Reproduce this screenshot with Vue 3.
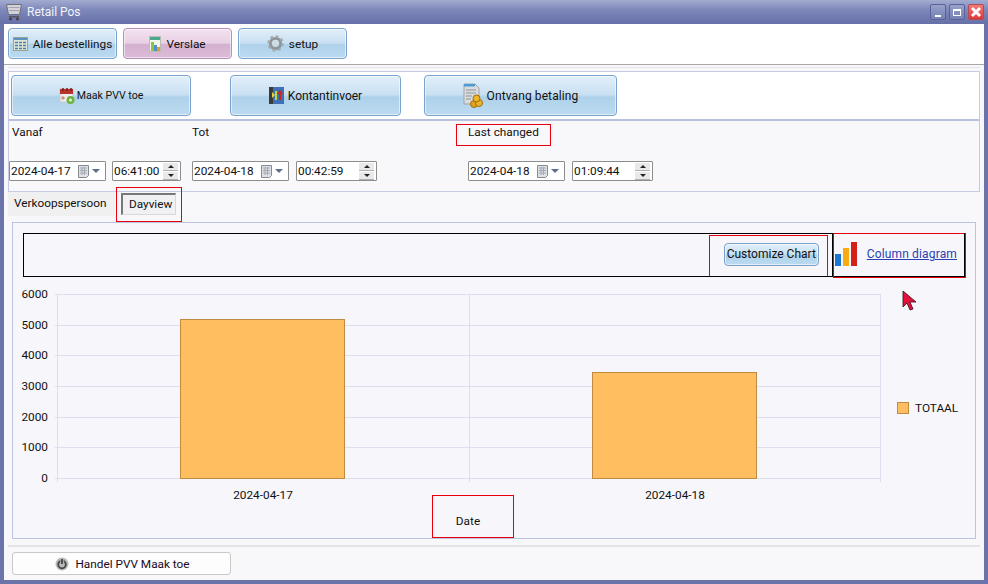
<script setup>
// Retail Pos: verslae scherm
const ticks = [6000, 5000, 4000, 3000, 2000, 1000, 0]
const plot = { left: 45, right: 868, top: 72, bottom: 256 }

const yFor = (v) => plot.bottom - (v / 6000) * (plot.bottom - plot.top)

const bars = [
  { label: '2024-04-17', value: 5180, x: 168, w: 164 },
  { label: '2024-04-18', value: 3450, x: 580, w: 164 }
]

const topButtons = [
  { text: 'Alle bestellings', icon: 'list', kind: 'blue' },
  { text: 'Verslae', icon: 'report', kind: 'pink' },
  { text: 'setup', icon: 'gear', kind: 'blue' }
]

const filters = [
  { label: 'Vanaf', date: '2024-04-17', time: '06:41:00', cls: 'f1' },
  { label: 'Tot', date: '2024-04-18', time: '00:42:59', cls: 'f2' },
  { label: 'Last changed', date: '2024-04-18', time: '01:09:44', cls: 'f3' }
]
</script>

<template>
  <div class="window">
    <div class="titlebar">
      <svg class="cart" width="16" height="18" viewBox="0 0 16 18">
        <path d="M0.500 1.500h15l-2 10h-11z" fill="#d4d4d8" stroke="#6f6f78" />
        <path d="M2.500 4.500h11M3 7.500h10" stroke="#a3a3ad" />
        <rect x="3" y="13" width="10" height="1.500" fill="#55555c" />
        <circle cx="4.500" cy="16" r="1.400" fill="#3f3f45" />
        <circle cx="11.500" cy="16" r="1.400" fill="#3f3f45" />
      </svg>
      <span class="title">Retail Pos</span>
      <div class="win-btns">
        <div class="win-btn"><i class="min"></i></div>
        <div class="win-btn"><i class="max"></i></div>
        <div class="win-btn close">
          <svg width="12" height="12" viewBox="0 0 12 12"><path d="M2 2l8 8M10 2l-8 8" stroke="#fff" stroke-width="3" /></svg>
        </div>
      </div>
    </div>

    <div class="client">
      <div class="toolbar">
        <button v-for="b in topButtons" :key="b.text" :class="['gbtn', 'top-btn', b.kind, b.icon]">
          <svg v-if="b.icon === 'list'" width="15" height="14" viewBox="0 0 15 14">
            <rect x="0.500" y="0.500" width="14" height="13" fill="#dfe6d8" stroke="#9aa58f" />
            <rect x="1" y="1" width="13" height="2" fill="#5d93c4" />
            <path d="M2 5.500h11M2 8.500h11M2 11.500h11" stroke="#4a7fb0" stroke-width="1.300" stroke-dasharray="3 1" />
          </svg>
          <svg v-else-if="b.icon === 'report'" width="12" height="16" viewBox="0 0 12 16">
            <rect x="0.500" y="0.500" width="11" height="15" fill="#f2f4ee" stroke="#b9bdb4" />
            <rect x="1" y="1" width="10" height="3" fill="#48a98c" />
            <rect x="2" y="6" width="3" height="9" fill="#8cc63f" />
            <rect x="5" y="9" width="3" height="6" fill="#4f8fd0" />
            <rect x="8" y="11" width="3" height="4" fill="#e59a2f" />
          </svg>
          <svg v-else width="17" height="17" viewBox="0 0 18 18">
            <circle cx="9" cy="9" r="5.500" fill="none" stroke="#8d9499" stroke-width="3" />
            <circle cx="9" cy="9" r="7.500" fill="none" stroke="#a5abaf" stroke-width="2.500" stroke-dasharray="3 2.890" />
            <circle cx="9" cy="9" r="3" fill="#d6dadb" />
          </svg>
          <span>{{ b.text }}</span>
        </button>
      </div>

      <div class="main">
        <div class="actions">
          <button class="gbtn act a1">
            <svg width="16" height="18" viewBox="0 0 16 18">
              <rect x="1" y="2" width="13" height="13" fill="#eee" stroke="#c7c7c7" />
              <rect x="1" y="2" width="13" height="5" fill="#b8322e" />
              <path d="M4 1v3M8 1v3M12 1v3" stroke="#7a1c1a" stroke-width="1.500" />
              <circle cx="11.500" cy="13" r="4" fill="#6cb33f" />
              <circle cx="11.500" cy="13" r="1.500" fill="#e4f3d4" />
              <circle cx="4" cy="11" r="1.800" fill="#d08f8f" />
            </svg>
            <span>Maak PVV toe</span>
          </button>
          <button class="gbtn act a2">
            <svg width="15" height="17" viewBox="0 0 15 17">
              <rect x="0" y="0" width="4" height="17" fill="#3a3a3a" />
              <rect x="4" y="0" width="11" height="17" fill="#3f6fb5" />
              <path d="M3 5l3 3-3 3z" fill="#e8d03a" />
              <path d="M6 4h2v9H6z" fill="#b7dc3c" />
              <path d="M11 3l3 4h-2v6h-2V7H8z" fill="#c9261f" />
            </svg>
            <span>Kontantinvoer</span>
          </button>
          <button class="gbtn act a3">
            <svg width="20" height="25" viewBox="0 0 20 25">
              <path d="M1 1h11l4 4v16H1z" fill="#d9dcdf" stroke="#9ea3a8" />
              <rect x="1" y="1" width="11" height="2.500" fill="#4e9bd4" />
              <path d="M3 7h10M3 10h10M3 13h6M3 16h5" stroke="#8e9398" />
              <circle cx="11" cy="21" r="3.500" fill="#e4a11b" stroke="#9c6c0c" />
              <circle cx="16" cy="20" r="3.500" fill="#f0b429" stroke="#9c6c0c" />
              <circle cx="13.500" cy="15.500" r="3.500" fill="#f0b429" stroke="#9c6c0c" />
            </svg>
            <span>Ontvang betaling</span>
          </button>
        </div>

        <div class="filters">
          <div v-for="f in filters" :key="f.label" :class="['filter', f.cls]">
            <div class="flabel">{{ f.label }}</div>
            <div class="finputs">
              <div class="inp date">
                <span>{{ f.date }}</span>
                <svg class="cal" width="12" height="13" viewBox="0 0 12 13">
                  <path d="M0.500 0.500h10v10l-2 2h-8z" fill="#dde1e7" stroke="#858a92" />
                  <path d="M2 3h7M2 5.500h7M2 8h7M4 2v8M6.500 2v8" stroke="#a4a9b1" />
                </svg>
                <i class="caret"></i>
              </div>
              <div class="inp time">
                <span>{{ f.time }}</span>
                <div class="spin">
                  <b><i class="up"></i></b>
                  <b><i class="down"></i></b>
                </div>
              </div>
            </div>
          </div>
        </div>

        <div class="tabs">
          <div class="tab">Verkoopspersoon</div>
          <div class="tab-on">Dayview</div>
        </div>

        <div class="card">
          <div class="chart-head">
            <button class="gbtn mini">Customize Chart</button>
            <svg class="bars-ico" width="22" height="24" viewBox="0 0 22 24">
              <rect x="0" y="12" width="6" height="12" fill="#1976d2" />
              <rect x="8" y="6" width="6" height="18" fill="#f9ab14" />
              <rect x="16" y="0" width="6" height="24" fill="#d32019" />
            </svg>
            <a class="diagram">Column diagram</a>
          </div>

          <svg class="chart" width="962" height="270" viewBox="0 42 962 270">
            <g stroke="#dcdff0" fill="none">
              <line v-for="t in ticks" :key="t" :x1="plot.left - 2" :x2="plot.right" :y1="Math.round(yFor(t)) + 0.500" :y2="Math.round(yFor(t)) + 0.500" />
              <line :x1="plot.left + 0.500" :x2="plot.left + 0.500" :y1="plot.top" :y2="plot.bottom + 4" />
              <line x1="457.500" x2="457.500" :y1="plot.top" :y2="plot.bottom + 4" />
              <line :x1="plot.right + 0.500" :x2="plot.right + 0.500" :y1="plot.top" :y2="plot.bottom + 4" />
            </g>
            <text v-for="t in ticks" :key="'l' + t" x="36" :y="yFor(t) + 4" text-anchor="end" class="ct">{{ t }}</text>
            <g v-for="b in bars" :key="b.label">
              <rect :x="b.x + 0.500" :y="Math.round(yFor(b.value)) + 0.500" :width="b.w" :height="plot.bottom - Math.round(yFor(b.value))" fill="#ffbe5f" stroke="#bf8b43" />
              <text :x="b.x + b.w / 2 + 1" y="277" text-anchor="middle" class="ct">{{ b.label }}</text>
            </g>
            <text x="456" y="303" text-anchor="middle" class="ct">Date</text>
            <rect x="885.500" y="180.500" width="11" height="11" fill="#ffbe5f" stroke="#bf8b43" />
            <text x="903" y="190" class="ct">TOTAAL</text>
          </svg>
        </div>

        <div class="footer">
          <button class="close-btn">
            <svg width="14" height="14" viewBox="0 0 14 14">
              <circle cx="7" cy="7" r="6.500" fill="#b9b9b9" />
              <circle cx="7" cy="7.500" r="3.800" fill="none" stroke="#444" stroke-width="1.800" />
              <path d="M7 2v5" stroke="#b9b9b9" stroke-width="3.500" />
              <path d="M7 2v5" stroke="#444" stroke-width="1.800" />
            </svg>
            <span>Handel PVV Maak toe</span>
          </button>
        </div>
      </div>
    </div>

    <!-- rooi merke oor die skermskoot -->
    <div class="mark m-last"></div>
    <div class="mark m-day"></div>
    <div class="mark m-date"></div>
    <div class="mark m-cust"></div>
    <div class="mark m-col"></div>
    <div class="blackbox b-head"></div>
    <div class="blackbox b-col"></div>
    <svg class="pointer" width="16" height="20" viewBox="0 0 16 20">
      <path d="M1 0v16l4-4 3 7 3-1-3-7h6z" fill="#e3123c" stroke="#3a0a14" stroke-width="0.800" />
    </svg>
  </div>
</template>

<style>
html, body { margin: 0; padding: 0; }
</style>

<style scoped>
.window {
  position: relative;
  width: 988px;
  height: 584px;
  box-sizing: border-box;
  display: flex;
  flex-direction: column;
  background: #6a74ab;
  padding: 0 4px 4px 4px;
  font-family: "Roboto", "Liberation Sans", sans-serif;
  font-size: 11.8px;
  color: #111;
  overflow: hidden;
}
.titlebar {
  height: 24px;
  margin: 0 -4px;
  padding: 0 4px 0 6px;
  display: flex;
  align-items: center;
  background: linear-gradient(#a3acd0, #7e88ba 40%, #6670a8);
  flex: none;
}
.cart { margin: 0 5px 0 0; }
.title { color: #f2f4fa; font-size: 12px; }
.win-btns {
  margin-left: auto;
  display: flex;
  gap: 3px;
}
.win-btn {
  width: 16px;
  height: 16px;
  box-sizing: border-box;
  border: 1px solid #596399;
  border-radius: 2px;
  background: linear-gradient(#98a1c9, #7580b5);
  display: flex;
  align-items: center;
  justify-content: center;
  position: relative;
}
.win-btn.close {
  background: linear-gradient(#f47b78, #df3838);
  border-color: #b54a55;
}
.min {
  position: absolute;
  left: 4px;
  bottom: 2px;
  width: 6px;
  height: 2px;
  background: #fff;
}
.max {
  width: 6px;
  height: 4px;
  border: 1px solid #fff;
  border-top-width: 2px;
}
.client {
  flex: 1;
  display: flex;
  flex-direction: column;
  background: #f8f8fb;
  min-height: 0;
}
.toolbar {
  height: 41px;
  box-sizing: border-box;
  background: #fff;
  border-bottom: 1px solid #a8a8a8;
  padding: 4px 0 0 4px;
  display: flex;
  gap: 6px;
  flex: none;
}
.gbtn {
  font: inherit;
  color: inherit;
  display: flex;
  align-items: center;
  justify-content: center;
  padding: 0;
  border: 1px solid #7ba2cd;
  border-radius: 4px;
  background: linear-gradient(#e2eff9 0%, #c9e0f2 48%, #aed1ea 54%, #bcdbf1 100%);
  box-shadow: inset 0 0 0 1px rgba(255, 255, 255, 0.55);
}
.gbtn.pink {
  border-color: #b78fb8;
  background: linear-gradient(#f3e2ef 0%, #e8d1e4 48%, #d4b0cf 54%, #dcbcd8 100%);
}
.top-btn {
  width: 109px;
  height: 31px;
  gap: 5px;
}
.main {
  flex: 1;
  display: flex;
  flex-direction: column;
  padding: 6px 4px 0 4px;
  min-height: 0;
}
.actions {
  height: 50px;
  box-sizing: border-box;
  flex: none;
  background: #fff;
  border: 1px solid #c6cbe2;
  border-bottom: 2px solid #b9c0dc;
  box-shadow: 0 -3px 0 #f8f8fb, 0 -4px 0 #e6e6ea;
  padding: 3px 0 0 2px;
  display: flex;
}
.act {
  height: 41px;
  gap: 4px;
  font-size: 12px;
}
.a1 { width: 180px; font-size: 10.6px; gap: 2px; }
.a2 { width: 171px; margin-left: 39px; }
.a3 { width: 193px; margin-left: 23px; letter-spacing: 0.1px; }
.filters {
  height: 71px;
  box-sizing: border-box;
  flex: none;
  display: flex;
  border-left: 1px solid #c6cbe2;
  border-right: 1px solid #c6cbe2;
  border-bottom: 1px solid #c6cbe2;
}
.filter { display: flex; flex-direction: column; padding-top: 4px; }
.f1 { width: 183px; }
.f2 { width: 276px; }
.flabel {
  height: 36px;
  line-height: 15px;
  padding-left: 3px;
}
.f2 .flabel, .f3 .flabel { padding-left: 0; }
.finputs { display: flex; gap: 6px; }
.f2 .finputs { gap: 7px; }
.f3 .finputs { gap: 7px; }
.inp {
  height: 20px;
  box-sizing: border-box;
  border: 1px solid #8d8d8d;
  background: #fff;
  display: flex;
  align-items: center;
  padding-left: 1px;
  border-radius: 1px;
}
.date { width: 97px; }
.time { width: 69px; }
.f2 .time { width: 81px; }
.f3 .time { width: 81px; }
.cal { margin-left: auto; }
.caret {
  width: 0;
  height: 0;
  margin: 0 5px 0 2px;
  border-left: 4px solid transparent;
  border-right: 4px solid transparent;
  border-top: 4px solid #5b6e8c;
}
.spin {
  margin-left: auto;
  margin-right: 2px;
  display: flex;
  flex-direction: column;
  gap: 1px;
}
.spin b {
  width: 15px;
  height: 7px;
  background: #e9e9e9;
  border-bottom: 1px solid #b0b0b0;
  display: flex;
  align-items: center;
  justify-content: center;
}
.up, .down {
  width: 0;
  height: 0;
  border-left: 3px solid transparent;
  border-right: 3px solid transparent;
}
.up { border-bottom: 3px solid #222; }
.down { border-top: 3px solid #222; }
.tabs {
  height: 30px;
  flex: none;
  display: flex;
  box-sizing: border-box;
}
.tab {
  width: 107px;
  height: 24px;
  background: #f0f0f0;
  padding: 4px 0 0 6px;
  box-sizing: border-box;
  line-height: 15px;
}
.tab-on {
  margin-left: 6px;
  margin-top: 1px;
  width: 55px;
  height: 22px;
  box-sizing: border-box;
  border: 1px solid #d8d8d8;
  border-top: 2px solid #777;
  border-left: 2px solid #777;
  background: #f1f1f3;
  padding: 2px 0 0 6px;
  line-height: 15px;
}
.card {
  height: 317px;
  flex: none;
  box-sizing: border-box;
  margin-left: 4px;
  width: 964px;
  border: 1px solid #bcc3de;
  background: #f7f7fb;
  position: relative;
}
.chart-head {
  height: 44px;
  margin: 9px 0 0 10px;
  width: 943px;
  display: flex;
  align-items: center;
  box-sizing: border-box;
}
.mini {
  width: 95px;
  height: 23px;
  margin-left: auto;
  font-size: 12px;
}
.bars-ico { margin: 0 10px 0 16px; }
.diagram {
  color: #2a3fb5;
  text-decoration: underline;
  font-size: 12px;
  letter-spacing: 0.15px;
  margin-right: 9px;
}
.chart { display: block; margin: -12px 0 0 -1px; }
.ct {
  font-family: "Roboto", "Liberation Sans", sans-serif;
  font-size: 11.8px;
  fill: #111;
}
.footer {
  margin-top: 6px;
  border-top: 2px solid #e4e4e8;
  padding: 5px 0 0 4px;
}
.close-btn {
  font: inherit;
  color: #1a0a20;
  width: 219px;
  height: 23px;
  border: 1px solid #c9c9c9;
  border-radius: 3px;
  background: #fdfdfd;
  display: flex;
  align-items: center;
  justify-content: center;
  gap: 6px;
  padding: 0 0 0 2px;
}
.mark, .blackbox {
  position: absolute;
  box-sizing: border-box;
  pointer-events: none;
}
.mark { border: 1px solid #e8000f; }
.blackbox { border: 1px solid #000; }
.m-last { left: 456px; top: 124px; width: 95px; height: 22px; }
.m-day { left: 116px; top: 187px; width: 66px; height: 35px; }
.m-date { left: 432px; top: 495px; width: 82px; height: 43px; }
.m-cust { left: 709px; top: 235px; width: 119px; height: 42px; }
.m-col { left: 833px; top: 233px; width: 133px; height: 45px; }
.b-head { left: 23px; top: 233px; width: 810px; height: 44px; }
.b-col { left: 834px; top: 233px; width: 131px; height: 44px; border-left: 0; border-top: 0; }
.pointer { position: absolute; left: 902px; top: 291px; }
</style>
